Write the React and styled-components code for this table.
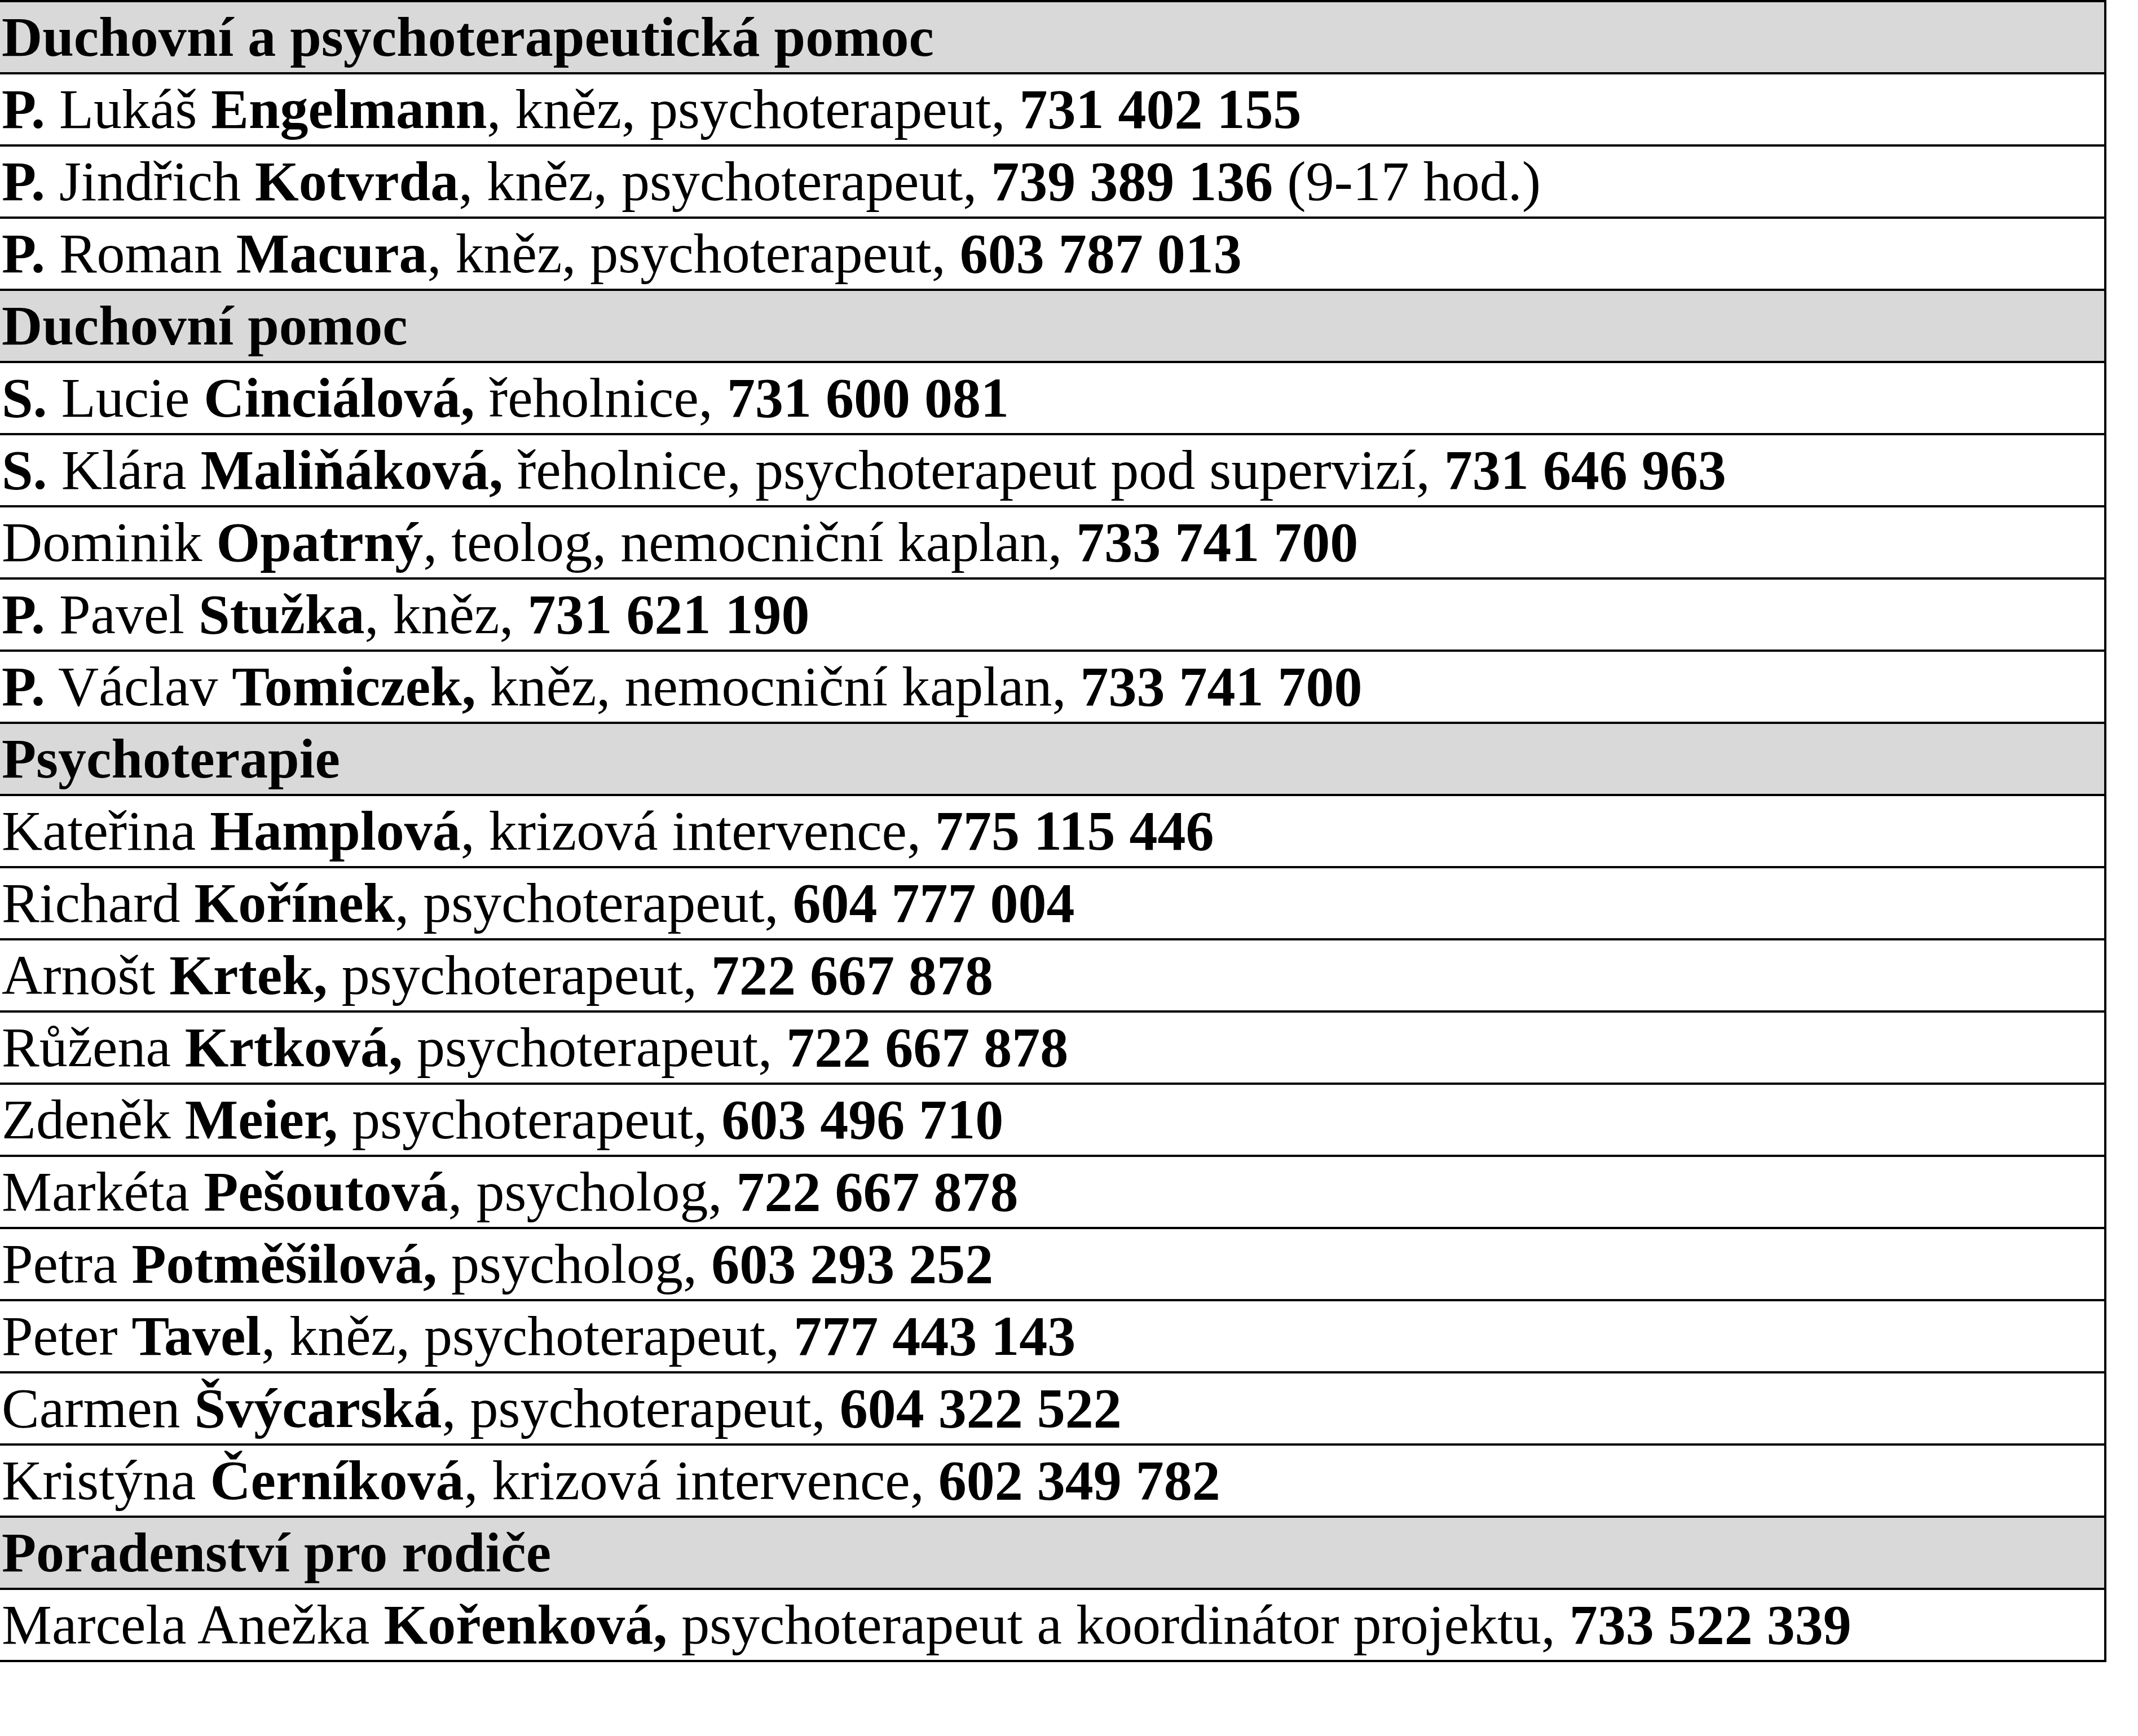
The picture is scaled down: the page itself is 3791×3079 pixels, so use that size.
import React from 'react';
import styled, { createGlobalStyle } from "styled-components";

const GlobalStyle = createGlobalStyle`
html, body {
    margin: 0;
    padding: 0;
    background: #ffffff;
}
`

const Sheet = styled.div`
width: 3735px;
box-sizing: border-box;
border-top: 4px solid #000;
border-right: 4px solid #000;
font-family: "Liberation Serif", "Times New Roman", serif;
font-size: 100px;
color: #000;
`

const Row = styled.div`
height: 124px;
line-height: 124px;
padding-left: 3px;
border-bottom: 4px solid #000;
white-space: nowrap;
background: ${props => props.$heading ? "#d9d9d9" : "#ffffff"};
font-weight: ${props => props.$heading ? 700 : 400};
`

const B = styled.b`
font-weight: 700;
`

const sections = [
    {
        title: "Duchovní a psychoterapeutická pomoc",
        rows: [
            [["P.", 1], [" Lukáš ", 0], ["Engelmann", 1], [", kněz, psychoterapeut, ", 0], ["731 402 155", 1]],
            [["P.", 1], [" Jindřich ", 0], ["Kotvrda", 1], [", kněz, psychoterapeut, ", 0], ["739 389 136", 1], [" (9-17 hod.)", 0]],
            [["P.", 1], [" Roman ", 0], ["Macura", 1], [", kněz, psychoterapeut, ", 0], ["603 787 013", 1]],
        ],
    },
    {
        title: "Duchovní pomoc",
        rows: [
            [["S.", 1], [" Lucie ", 0], ["Cinciálová,", 1], [" řeholnice, ", 0], ["731 600 081", 1]],
            [["S.", 1], [" Klára ", 0], ["Maliňáková,", 1], [" řeholnice, psychoterapeut pod supervizí, ", 0], ["731 646 963", 1]],
            [["Dominik ", 0], ["Opatrný", 1], [", teolog, nemocniční kaplan, ", 0], ["733 741 700", 1]],
            [["P.", 1], [" Pavel ", 0], ["Stužka", 1], [", kněz, ", 0], ["731 621 190", 1]],
            [["P.", 1], [" Václav ", 0], ["Tomiczek,", 1], [" kněz, nemocniční kaplan, ", 0], ["733 741 700", 1]],
        ],
    },
    {
        title: "Psychoterapie",
        rows: [
            [["Kateřina ", 0], ["Hamplová", 1], [", krizová intervence, ", 0], ["775 115 446", 1]],
            [["Richard ", 0], ["Kořínek", 1], [", psychoterapeut, ", 0], ["604 777 004", 1]],
            [["Arnošt ", 0], ["Krtek,", 1], [" psychoterapeut, ", 0], ["722 667 878", 1]],
            [["Růžena ", 0], ["Krtková,", 1], [" psychoterapeut, ", 0], ["722 667 878", 1]],
            [["Zdeněk ", 0], ["Meier,", 1], [" psychoterapeut, ", 0], ["603 496 710", 1]],
            [["Markéta ", 0], ["Pešoutová", 1], [", psycholog, ", 0], ["722 667 878", 1]],
            [["Petra ", 0], ["Potměšilová,", 1], [" psycholog, ", 0], ["603 293 252", 1]],
            [["Peter ", 0], ["Tavel", 1], [", kněz, psychoterapeut, ", 0], ["777 443 143", 1]],
            [["Carmen ", 0], ["Švýcarská", 1], [", psychoterapeut, ", 0], ["604 322 522", 1]],
            [["Kristýna ", 0], ["Černíková", 1], [", krizová intervence, ", 0], ["602 349 782", 1]],
        ],
    },
    {
        title: "Poradenství pro rodiče",
        rows: [
            [["Marcela Anežka ", 0], ["Kořenková,", 1], [" psychoterapeut a koordinátor projektu, ", 0], ["733 522 339", 1]],
        ],
    },
];

const App = () => {
    return (
        <>
            <GlobalStyle />
            <Sheet>
                {sections.map((section) => (
                    <React.Fragment key={section.title}>
                        <Row $heading>{section.title}</Row>
                        {section.rows.map((parts, i) => (
                            <Row key={i}>
                                {parts.map(([text, bold], j) => bold ? <B key={j}>{text}</B> : <React.Fragment key={j}>{text}</React.Fragment>)}
                            </Row>
                        ))}
                    </React.Fragment>
                ))}
            </Sheet>
        </>
    );
};

export default App;
